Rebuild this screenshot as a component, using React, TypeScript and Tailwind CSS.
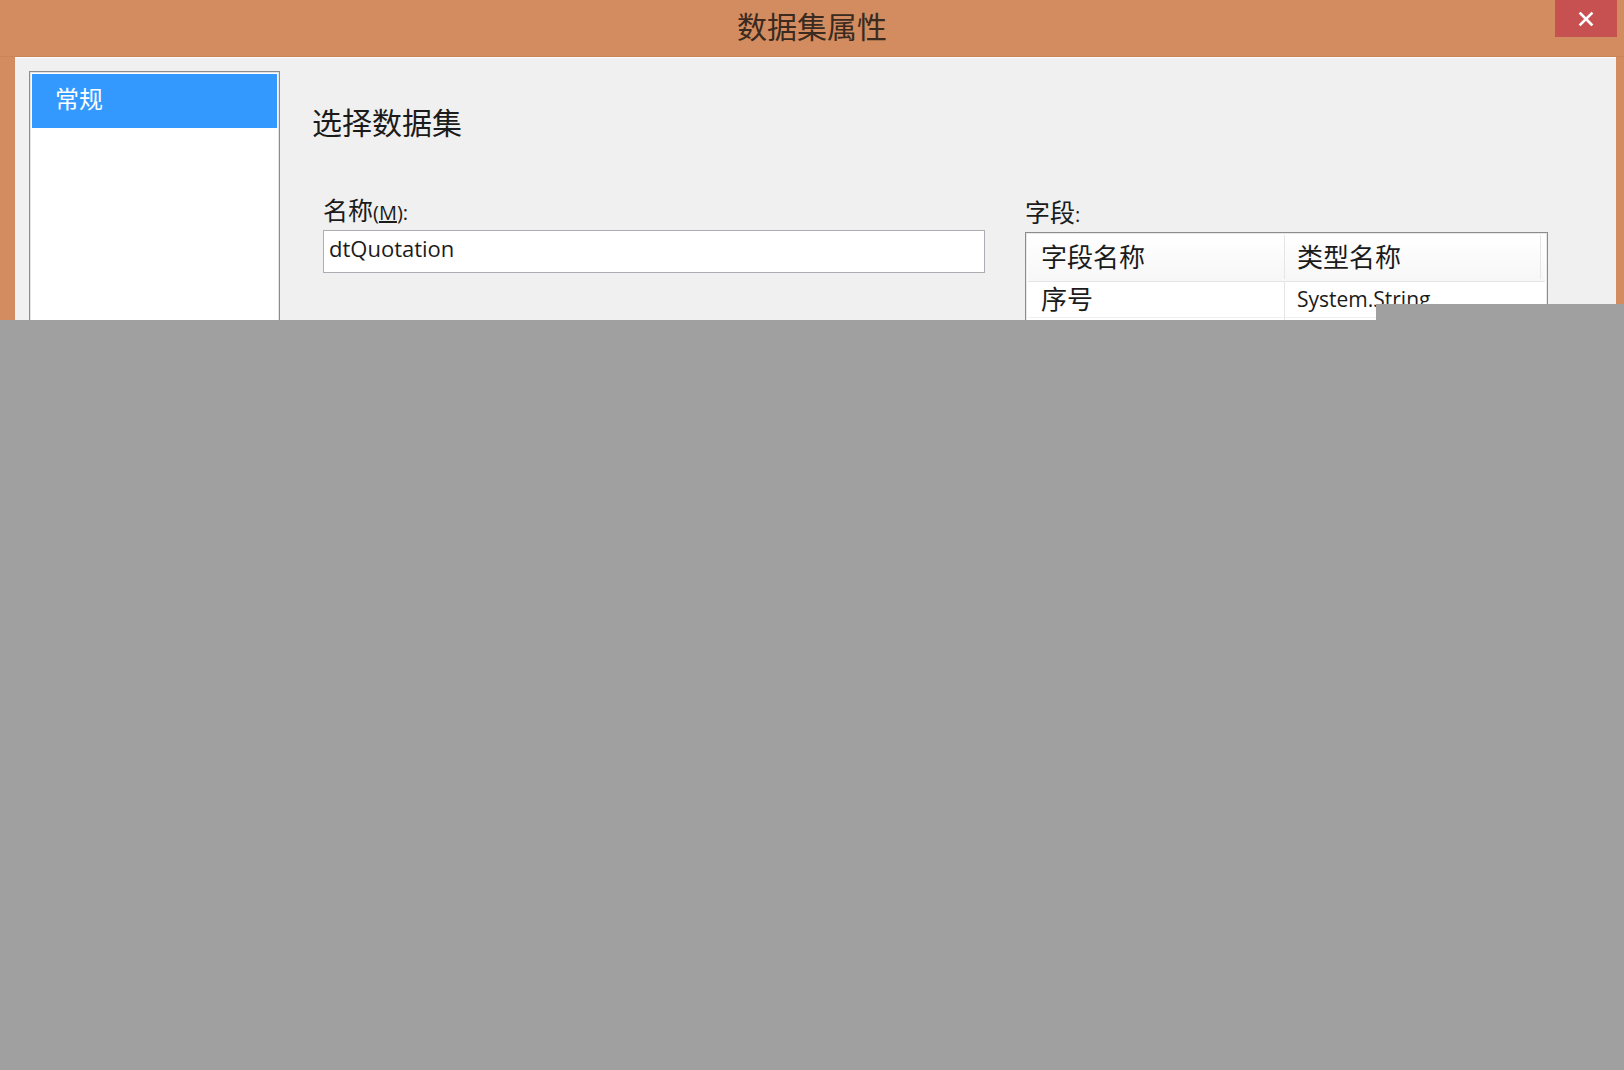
import React from 'react';

const FONT = "font-['Open_Sans','Noto_Sans_CJK_SC',sans-serif]";

const FIELDS = [
  { name: '序号', type: 'System.String' },
  { name: '产品名称', type: 'System.String' },
  { name: '规格型号', type: 'System.String' },
  { name: '数量', type: 'System.String' },
];

function CloseIcon() {
  return (
    <svg width="16" height="16" viewBox="0 0 16 16" fill="none">
      <path d="M2.5 2.5 L13.5 13.5 M13.5 2.5 L2.5 13.5" stroke="white" strokeWidth="2.6" strokeLinecap="square" />
    </svg>
  );
}

export default function App() {
  return (
    <div className={`relative h-[1070px] w-[1624px] overflow-hidden bg-[#D38C5F] ${FONT}`}>
      {/* title bar */}
      <div className="relative flex h-[57px] items-center justify-center border-b border-[#C98457]">
        <span className="pb-[3px] text-[30px] leading-none text-[#3a2a20]">数据集属性</span>
        <button className="absolute right-[7px] top-0 flex h-[37px] w-[62px] items-center justify-center bg-[#C75050]">
          <CloseIcon />
        </button>
      </div>

      {/* client area */}
      <div className="ml-[15px] mr-[8px] flex h-[1013px] border-t border-[#FAFAFA] bg-[#F0F0F0]">
        {/* page list */}
        <div className="ml-[14px] mt-[13px] h-[700px] w-[251px] border border-[#8A8C90] bg-white p-[2px] shadow-[inset_0_0_0_1px_#E3E3E3]">
          <div className="flex h-[54px] items-center bg-[#3399FF] pl-[23px] text-[24px] leading-none text-white">
            <span className="-mt-[4px]">常规</span>
          </div>
        </div>

        {/* page body */}
        <div className="flex flex-col pl-[32px] pt-[46px]">
          <h1 className="h-[38px] text-[30px] leading-[38px] text-[#1b1b1b]">选择数据集</h1>

          <div className="mt-[53px] flex gap-[40px] pl-[11px]">
            {/* name */}
            <div className="flex w-[662px] flex-col">
              <label className="flex h-[30px] items-baseline text-[25px] leading-[30px] text-[#1b1b1b]">
                名称
                <span className="text-[20px]">
                  (<span className="underline">M</span>):
                </span>
              </label>
              <div className="mt-[5px] flex h-[43px] items-center border border-[#ABADB3] bg-white px-[5px] pb-[6px] text-[22px] text-[#1b1b1b]">
                dtQuotation
              </div>
            </div>

            {/* fields */}
            <div className="flex w-[523px] flex-col pt-[2px]">
              <label className="flex h-[30px] items-baseline text-[25px] leading-[30px] text-[#1b1b1b]">
                字段<span className="text-[20px]">:</span>
              </label>
              <div className="mt-[5px] h-[400px] border border-[#8A8C90] bg-white p-[2px] shadow-[inset_0_0_0_1px_#E8E8E8]">
                <div className="flex h-[47px] border-b border-[#E5E5E5] bg-gradient-to-b from-white to-[#F7F7F7] pb-[2px] text-[26px] text-[#1b1b1b]">
                  <div className="flex w-[257px] items-center border-r border-[#E5E5E5] pl-[13px]">字段名称</div>
                  <div className="flex w-[256px] items-center border-r border-[#E5E5E5] pl-[12px]">类型名称</div>
                </div>
                {FIELDS.map((f) => (
                  <div key={f.name} className="flex h-[36px] border-b border-[#F0F0F0] text-[#1b1b1b]">
                    <div className="flex w-[257px] items-center border-r border-[#E5E5E5] pl-[13px] text-[26px]">{f.name}</div>
                    <div className="flex w-[256px] items-center pl-[12px] text-[21px]">{f.type}</div>
                  </div>
                ))}
              </div>
            </div>
          </div>
        </div>
      </div>

      {/* grey cover over the lower part of the capture */}
      <div className="absolute bottom-0 left-0 right-0 top-[320px] bg-[#A0A0A0]" />
      <div className="absolute left-[1376px] right-0 top-[304px] h-[16px] bg-[#A0A0A0]" />
    </div>
  );
}
